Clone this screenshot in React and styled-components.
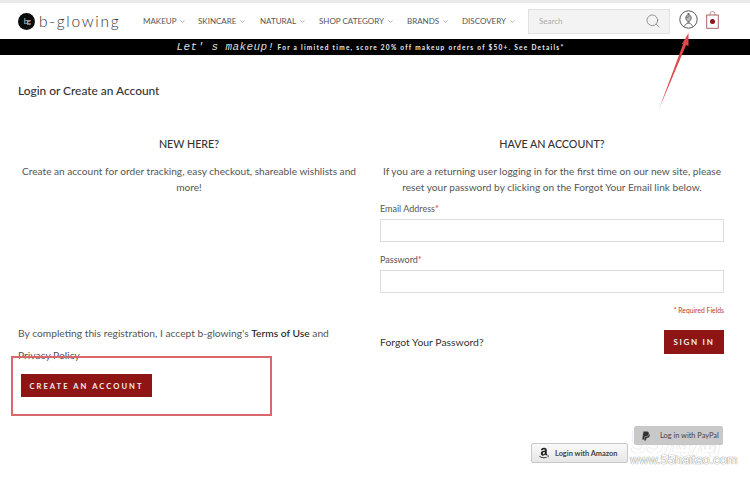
import React from "react";
import styled, { createGlobalStyle } from "styled-components";
import { ChevronDown, Search as SearchIcon } from "lucide-react";
import { FaAmazon, FaPaypal } from "react-icons/fa";

const Global = createGlobalStyle`
  html, body { margin: 0; padding: 0; background: #fff; }
  body { font-family: Lato, "Liberation Sans", sans-serif; color: #333; }
  * { box-sizing: border-box; }
`;

const Page = styled.div`
  position: relative;
  width: 750px;
  height: 477px;
  overflow: hidden;
  background: #fff;
  border-top: 3px solid #e9e9e9;
`;

const Header = styled.header`
  display: flex;
  align-items: center;
  height: 36px;
  padding-left: 18px;
`;

const Logo = styled.div`
  display: flex;
  align-items: center;
  gap: 4px;
  width: 125px;
`;

const LogoMark = styled.span`
  display: flex;
  align-items: center;
  justify-content: center;
  width: 17px;
  height: 17px;
  border-radius: 50%;
  background: #0c0c0c;
  color: #ccc;
  font-size: 8px;
  letter-spacing: -1.5px;
`;

const LogoText = styled.span`
  font-size: 15.5px;
  font-weight: 300;
  letter-spacing: 1.72px;
  color: #333;
`;

const Nav = styled.nav`
  display: flex;
  width: 385px;
`;

const NavItem = styled.span`
  display: flex;
  align-items: center;
  gap: 3px;
  width: ${(p) => p.$w}px;
  font-size: 8px;
  color: #555;
  white-space: nowrap;
`;

const SearchBox = styled.div`
  display: flex;
  align-items: center;
  justify-content: space-between;
  width: 142px;
  height: 25px;
  padding: 0 8px 0 10px;
  background: #f3f3f3;
  border: 1px solid #e2e2e2;
  font-size: 8px;
  color: #aaa;
`;

const HeaderIcons = styled.div`
  display: flex;
  align-items: center;
  gap: 8px;
  margin: 0 0 3px 9px;
`;

const PromoBar = styled.div`
  display: flex;
  align-items: center;
  justify-content: center;
  gap: 3px;
  height: 16px;
  padding-right: 9px;
  background: #000;
  color: #eee;
  white-space: nowrap;
`;

const PromoScript = styled.span`
  font-family: "Liberation Mono", monospace;
  font-style: italic;
  font-size: 11px;
  letter-spacing: 0.4px;
  color: #ddd;
`;

const PromoText = styled.span`
  font-size: 6.5px;
  font-weight: 700;
  letter-spacing: 1.26px;
`;

const Main = styled.main`
  padding: 28px 26px 0 18px;
`;

const PageTitle = styled.h1`
  margin: 0;
  font-size: 11.9px;
  line-height: 16px;
  font-weight: 500;
  color: #333;
`;

const Columns = styled.div`
  display: grid;
  grid-template-columns: 342px 344px;
  gap: 20px;
  margin-top: 37px;
`;

const Column = styled.section`
  display: flex;
  flex-direction: column;
`;

const Heading = styled.h2`
  margin: 0 0 11px;
  font-size: 10.7px;
  line-height: 16px;
  font-weight: 500;
  text-align: center;
  color: #333;
`;

const Intro = styled.p`
  margin: 0;
  font-size: 10.15px;
  line-height: 16px;
  text-align: center;
  color: #555;
`;

const Agreement = styled.p`
  margin: 127px 0 0;
  font-size: 10.25px;
  line-height: 22px;
  color: #555;
  b { font-weight: 500; color: #222; }
`;

const CreateButton = styled.button`
  display: block;
  width: 131px;
  height: 23px;
  margin: 8px 0 0 3px;
  padding: 0;
  border: 0;
  background: #8e1513;
  color: #eee;
  font: 700 7.6px Lato, sans-serif;
  letter-spacing: 2.05px;
`;

const Field = styled.label`
  display: block;
  margin-top: ${(p) => p.$top}px;
  font-size: 9px;
  line-height: 12px;
  color: #555;
`;

const Star = styled.span`
  color: #c0392b;
`;

const Input = styled.input`
  display: block;
  width: 100%;
  height: 23px;
  margin-top: 4px;
  background: #fff;
  border: 1px solid #ddd;
`;

const Required = styled.div`
  margin-top: 12px;
  font-size: 6.8px;
  line-height: 10px;
  text-align: right;
  color: #c0392b;
`;

const SignInRow = styled.div`
  display: flex;
  align-items: center;
  justify-content: space-between;
  margin-top: 15px;
`;

const ForgotLink = styled.span`
  font-size: 10.4px;
  color: #333;
`;

const SignInButton = styled.button`
  width: 60px;
  height: 24px;
  padding: 0;
  border: 0;
  background: #8e1513;
  color: #eee;
  font: 700 8px Lato, sans-serif;
  letter-spacing: 1.7px;
`;

const SocialButton = styled.div`
  position: absolute;
  display: flex;
  align-items: center;
  gap: ${(p) => p.$gap}px;
  left: ${(p) => p.$x}px;
  top: ${(p) => p.$y}px;
  width: ${(p) => p.$w}px;
  height: ${(p) => p.$h}px;
  padding-left: ${(p) => p.$pad}px;
  border: 1px solid #c8c8c8;
  border-radius: 2px;
  background: ${(p) => p.$bg};
  color: #444;
  font-size: ${(p) => p.$size}px;
  font-weight: ${(p) => p.$weight};
  white-space: nowrap;
`;

const Watermark = styled.div`
  position: absolute;
  left: 630px;
  top: 449px;
  font: 400 12.8px "Liberation Sans", sans-serif;
  color: #fff;
  text-shadow: 0 0 1px #888, 0 0 1px #888;
`;

const WatermarkMark = styled.div`
  position: absolute;
  left: 630px;
  top: 420px;
  font: 700 30px "Noto Sans CJK SC", sans-serif;
  line-height: 34px;
  letter-spacing: -1.5px;
  color: #fff;
  text-shadow: 0 0 1px #bbb;
  white-space: nowrap;
`;

const Highlight = styled.div`
  position: absolute;
  left: 11px;
  top: 353px;
  width: 261px;
  height: 60px;
  border: 2px solid #d9686c;
`;

const Arrow = styled.svg`
  position: absolute;
  left: 650px;
  top: 25px;
`;

function UserIcon() {
  return (
    <svg width="19" height="19" viewBox="0 0 19 19" fill="none" stroke="#555">
      <circle cx="9.5" cy="9.5" r="8.7" />
      <circle cx="9.5" cy="3.9" r="1" fill="#555" stroke="none" />
      <path d="M6.8 8c0-2 1.200-3.200 2.700-3.200S12.200 6 12.200 8c0 1.800-1 3.500-2.700 3.500S6.800 9.800 6.800 8z" fill="#bbb" strokeWidth="0.8" />
      <path d="M7 7.500c1.500 0 3-.6 3.500-1.600" strokeWidth="0.7" />
      <path d="M9 11.500v1.700M10 11.500v1.700M5.500 16.500c.4-2 2-3.300 4-3.300s3.600 1.300 4 3.300" strokeWidth="0.8" />
    </svg>
  );
}

function BagIcon() {
  return (
    <svg width="13" height="18" viewBox="0 0 13 18" fill="none">
      <path d="M4 4.500V3a2.500 2.500 0 0 1 5 0v1.500" stroke="#b77" strokeWidth="0.8" />
      <rect x="0.700" y="4" width="11.600" height="13.300" stroke="#a66" />
      <circle cx="6.500" cy="10.500" r="2.500" fill="#8e1513" />
    </svg>
  );
}

const navItems = [
  ["MAKEUP", 55],
  ["SKINCARE", 62],
  ["NATURAL", 59],
  ["SHOP CATEGORY", 88],
  ["BRANDS", 55],
  ["DISCOVERY", 66],
];

export default function App() {
  return (
    <Page>
      <Global />
      <Header>
        <Logo>
          <LogoMark>bg</LogoMark>
          <LogoText>b-glowing</LogoText>
        </Logo>
        <Nav>
          {navItems.map(([label, w]) => (
            <NavItem key={label} $w={w}>
              {label}
              <ChevronDown size={7} strokeWidth={1.5} />
            </NavItem>
          ))}
        </Nav>
        <SearchBox>
          Search
          <SearchIcon size={16} strokeWidth={1} color="#666" />
        </SearchBox>
        <HeaderIcons>
          <UserIcon />
          <BagIcon />
        </HeaderIcons>
      </Header>
      <PromoBar>
        <PromoScript>Let' s makeup!</PromoScript>
        <PromoText>For a limited time, score 20% off makeup orders of $50+. See Details*</PromoText>
      </PromoBar>
      <Main>
        <PageTitle>Login or Create an Account</PageTitle>
        <Columns>
          <Column>
            <Heading>NEW HERE?</Heading>
            <Intro>
              Create an account for order tracking, easy checkout, shareable wishlists and more!
            </Intro>
            <Agreement>
              By completing this registration, I accept b-glowing's <b>Terms of Use</b> and
              <br />
              Privacy Policy
            </Agreement>
            <CreateButton>CREATE AN ACCOUNT</CreateButton>
          </Column>
          <Column>
            <Heading>HAVE AN ACCOUNT?</Heading>
            <Intro>
              If you are a returning user logging in for the first time on our new site, please
              reset your password by clicking on the Forgot Your Email link below.
            </Intro>
            <Field $top={8}>
              Email Address<Star>*</Star>
              <Input />
            </Field>
            <Field $top={12}>
              Password<Star>*</Star>
              <Input />
            </Field>
            <Required>* Required Fields</Required>
            <SignInRow>
              <ForgotLink>Forgot Your Password?</ForgotLink>
              <SignInButton>SIGN IN</SignInButton>
            </SignInRow>
          </Column>
        </Columns>
      </Main>
      <Highlight />
      <Arrow width="50" height="85" viewBox="0 0 50 85">
        <path d="M9 81 L33.500 15 L36.500 16 Z" fill="#e0484b" />
        <path d="M38.500 5 L32 16 L38.500 18 Z" fill="#e0484b" />
      </Arrow>
      <WatermarkMark>55海淘</WatermarkMark>
      <SocialButton $x={531} $y={440} $w={97} $h={20} $pad={6} $gap={5} $size={7.4} $weight={700} $bg="linear-gradient(#fafafa, #e6e6e6)">
        <FaAmazon size={12} color="#222" />
        Login with Amazon
      </SocialButton>
      <SocialButton $x={634} $y={423} $w={89} $h={19} $pad={6} $gap={9} $size={7.4} $weight={400} $bg="#c9c9c9">
        <FaPaypal size={10} color="#333" />
        Log in with PayPal
      </SocialButton>
      <Watermark>www.55haitao.com</Watermark>
    </Page>
  );
}
